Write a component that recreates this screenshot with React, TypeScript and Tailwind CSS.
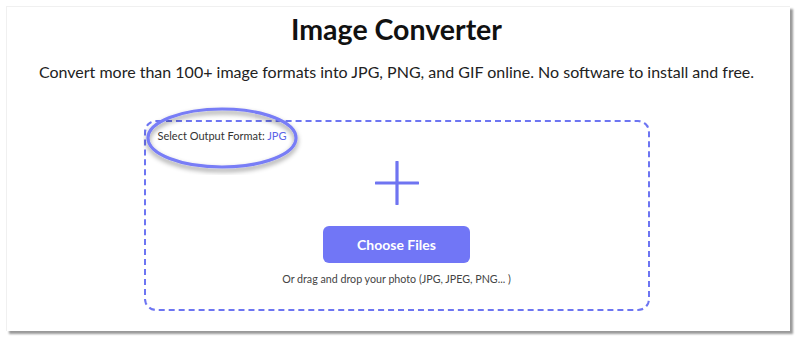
import React from 'react';

export default function App() {
  return (
    <div className="w-[800px] h-[340px] bg-white pt-[6px] pl-[6px]" style={{ fontFamily: 'Lato, "Noto Sans", sans-serif' }}>
      {/* Frame */}
      <div className="relative w-[784px] h-[325px] pr-[4px] bg-white border-l border-t border-[#f0f0f0] shadow-[3px_3px_2px_rgba(0,0,0,0.4)] flex flex-col items-center">
        <h1 className="mt-[4px] text-[28.5px] leading-[36px] font-bold text-[#111]">Image Converter</h1>
        <p className="mt-[14px] text-[16px] leading-[22px] text-[#222]">
          Convert more than 100+ image formats into JPG, PNG, and GIF online. No software to install and free.
        </p>

        {/* Drop zone */}
        <div className="mt-[37px] w-[506px] h-[191px] border-2 border-dashed border-[#6d75f2] rounded-[12px] flex flex-col items-center">
          <div className="self-start ml-[12px] mt-[6px] text-[11px] leading-[16px] text-[#333]">
            Select Output Format: <span className="text-[#5b63e8]">JPG</span>
          </div>
          <svg className="mt-[17px]" width="44" height="44" viewBox="0 0 44 44">
            <path d="M22 1v42M1 22h42" stroke="#6f74f1" strokeWidth="3.2" strokeLinecap="round" />
          </svg>
          <button className="mt-[21px] w-[147px] h-[37px] rounded-[6px] bg-[#7176f6] text-white text-[14px] font-bold">
            Choose Files
          </button>
          <p className="mt-[8px] text-[10.7px] leading-[16px] text-[#444]">Or drag and drop your photo (JPG, JPEG, PNG... )</p>
        </div>

        {/* Highlight annotation */}
        <svg className="absolute left-[136px] top-[96px]" width="160" height="72" viewBox="0 0 160 72">
          <defs>
            <filter id="sh" x="-20%" y="-30%" width="140%" height="160%">
              <feDropShadow dx="0" dy="3" stdDeviation="2.5" floodColor="#000" floodOpacity="0.45" />
            </filter>
          </defs>
          <ellipse cx="79" cy="35" rx="74" ry="29" fill="none" stroke="#787df6" strokeWidth="3.2" filter="url(#sh)" />
        </svg>
      </div>
    </div>
  );
}
